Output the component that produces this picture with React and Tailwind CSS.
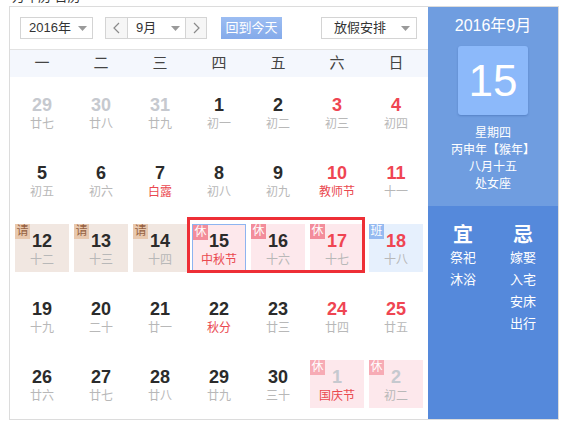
import React from 'react'

const FONT = { fontFamily: '"Liberation Sans", "Noto Sans CJK SC", sans-serif' }

const weekdays = ['一', '二', '三', '四', '五', '六', '日']

// n: number, l: lunar, t: type (prev/next month), red: weekend, lr: red lunar, b: badge
const days = [
  { n: 29, l: '廿七', t: 'out' }, { n: 30, l: '廿八', t: 'out' }, { n: 31, l: '廿九', t: 'out' },
  { n: 1, l: '初一' }, { n: 2, l: '初二' }, { n: 3, l: '初三', red: true }, { n: 4, l: '初四', red: true },
  { n: 5, l: '初五' }, { n: 6, l: '初六' }, { n: 7, l: '白露', lr: true }, { n: 8, l: '初八' },
  { n: 9, l: '初九' }, { n: 10, l: '教师节', red: true, lr: true }, { n: 11, l: '十一', red: true },
  { n: 12, l: '十二', b: 'qing' }, { n: 13, l: '十三', b: 'qing' }, { n: 14, l: '十四', b: 'qing' },
  { n: 15, l: '中秋节', b: 'xiu', lr: true, sel: true }, { n: 16, l: '十六', b: 'xiu' },
  { n: 17, l: '十七', b: 'xiu', red: true }, { n: 18, l: '十八', b: 'ban', red: true },
  { n: 19, l: '十九' }, { n: 20, l: '二十' }, { n: 21, l: '廿一' }, { n: 22, l: '秋分', lr: true },
  { n: 23, l: '廿三' }, { n: 24, l: '廿四', red: true }, { n: 25, l: '廿五', red: true },
  { n: 26, l: '廿六' }, { n: 27, l: '廿七' }, { n: 28, l: '廿八' }, { n: 29, l: '廿九' },
  { n: 30, l: '三十' }, { n: 1, l: '国庆节', t: 'out', b: 'xiu2', lr: true }, { n: 2, l: '初二', t: 'out', b: 'xiu2' },
]

function Caret() {
  return (
    <svg width="9" height="5" viewBox="0 0 9 5" className="shrink-0">
      <path d="M0 0 L9 0 L4.5 5 Z" fill="#9a9a9a" />
    </svg>
  )
}

function Chevron({ dir }) {
  return (
    <svg width="7" height="12" viewBox="0 0 7 12">
      <path d={dir === 'left' ? 'M6 1 L1 6 L6 11' : 'M1 1 L6 6 L1 11'} fill="none" stroke="#8a8a8a" strokeWidth="1.2" />
    </svg>
  )
}

function Badge({ kind }) {
  const cls = {
    qing: 'bg-[#e8c8ae] text-[#95603f]',
    xiu: 'bg-[#f38d9b] text-white',
    xiu2: 'bg-[#f7abb5] text-white',
    ban: 'bg-[#95baf1] text-white',
  }[kind]
  const label = kind === 'qing' ? '请' : kind === 'ban' ? '班' : '休'
  return (
    <span className={`absolute top-0 left-0 w-[15px] h-[15px] text-[12px] leading-[15px] text-center ${cls}`}>
      {label}
    </span>
  )
}

function DayCell({ d }) {
  const bg = {
    qing: 'bg-[#f1e7e1]',
    xiu: 'bg-[#fde8ec]',
    xiu2: 'bg-[#fde8ec]',
    ban: 'bg-[#e6f0fd]',
  }[d.b] || ''
  const numColor = d.t === 'out' ? 'text-[#c6c9cf]' : d.red ? 'text-[#ef4552]' : 'text-[#2b2b2b]'
  const lunarColor = d.lr ? 'text-[#ea4850]' : 'text-[#b8b8b8]'
  return (
    <div className={`relative h-[48px] flex flex-col items-center ${bg} ${d.sel ? 'border border-[#8db4f0]' : ''}`}>
      {d.b && <Badge kind={d.b} />}
      <div className={`${d.sel ? 'pt-[6px]' : 'pt-[7px]'} text-[18px] leading-[20px] font-bold ${numColor}`}>{d.n}</div>
      <div className={`mt-[1px] text-[12px] leading-[16px] ${lunarColor}`}>{d.l}</div>
    </div>
  )
}

export default function App() {
  return (
    <div className="w-[568px] h-[426px] bg-white relative overflow-hidden" style={FONT}>
      <div className="h-[6px] overflow-hidden pl-[12px]">
        <div className="text-[13px] leading-[13px] text-[#333] mt-[-10px]">万年历 日历</div>
      </div>
      <div className="ml-[9px] w-[550px] h-[414px] border border-[#dcdcdc] flex">
        {/* left */}
        <div className="w-[418px] flex flex-col">
          <div className="h-[42px] flex items-start pt-[10px] pl-[10px] pr-[10px] text-[13px] text-[#333]">
            <div className="w-[73px] h-[22px] border border-[#d4d4d4] flex items-center justify-between pl-[8px] pr-[5px]">
              <span>2016年</span>
              <Caret />
            </div>
            <div className="ml-[12px] h-[22px] flex border border-[#d4d4d4]">
              <div className="w-[22px] flex items-center justify-center bg-[#f6f6f6] border-r border-[#d4d4d4]">
                <Chevron dir="left" />
              </div>
              <div className="w-[57px] flex items-center justify-between pl-[8px] pr-[5px]">
                <span>9月</span>
                <Caret />
              </div>
              <div className="w-[21px] flex items-center justify-center bg-[#f6f6f6] border-l border-[#d4d4d4]">
                <Chevron dir="right" />
              </div>
            </div>
            <div className="ml-[14px] w-[61px] h-[22px] flex items-center justify-center text-white bg-gradient-to-b from-[#9cbdf2] to-[#84aaea]">
              回到今天
            </div>
            <div className="ml-auto mr-[1px] w-[96px] h-[22px] border border-[#d4d4d4] flex items-center justify-between pl-[12px] pr-[6px]">
              <span>放假安排</span>
              <Caret />
            </div>
          </div>
          <div className="h-[28px] border-t border-[#e2e2e2] bg-[#f4f7fd] grid grid-cols-7 gap-x-[5px] px-[5px] items-center text-[15px] text-[#444]">
            {weekdays.map(w => (
              <div key={w} className="text-center">{w}</div>
            ))}
          </div>
          <div className="pt-[11px] px-[5px] grid grid-cols-7 gap-x-[5px] gap-y-[20px]">
            {days.map((d, i) => (
              <DayCell key={i} d={d} />
            ))}
          </div>
        </div>

        {/* right */}
        <div className="w-[130px] flex flex-col text-white">
          <div className="h-[199px] bg-[#6f9de0] flex flex-col items-center">
            <div className="pt-[8px] text-[16px] leading-[22px]">2016年9月</div>
            <div className="mt-[9px] w-[70px] h-[69px] rounded-[3px] bg-[#8cb9fa] shadow-[0_1px_2px_rgba(40,80,150,0.35)] flex items-center justify-center text-[44px] leading-none">
              15
            </div>
            <div className="mt-[10px] text-[12px] leading-[17px] text-center">
              <div>星期四</div>
              <div>丙申年【猴年】</div>
              <div>八月十五</div>
              <div>处女座</div>
            </div>
          </div>
          <div className="flex-1 bg-[#5589db] grid grid-cols-2 px-[5px] pt-[18px] content-start">
            <div className="flex flex-col items-center">
              <div className="text-[20px] leading-[22px] font-bold">宜</div>
              <div className="text-[13px] leading-[22px] mt-[1px]">祭祀</div>
              <div className="text-[13px] leading-[22px]">沐浴</div>
            </div>
            <div className="flex flex-col items-center">
              <div className="text-[20px] leading-[22px] font-bold">忌</div>
              <div className="text-[13px] leading-[22px] mt-[1px]">嫁娶</div>
              <div className="text-[13px] leading-[22px]">入宅</div>
              <div className="text-[13px] leading-[22px]">安床</div>
              <div className="text-[13px] leading-[22px]">出行</div>
            </div>
          </div>
        </div>
      </div>

      {/* red annotation frame */}
      <div className="absolute left-[187px] top-[217px] w-[178px] h-[56px] border-[3px] border-[#ee2f36] pointer-events-none" />
    </div>
  )
}
